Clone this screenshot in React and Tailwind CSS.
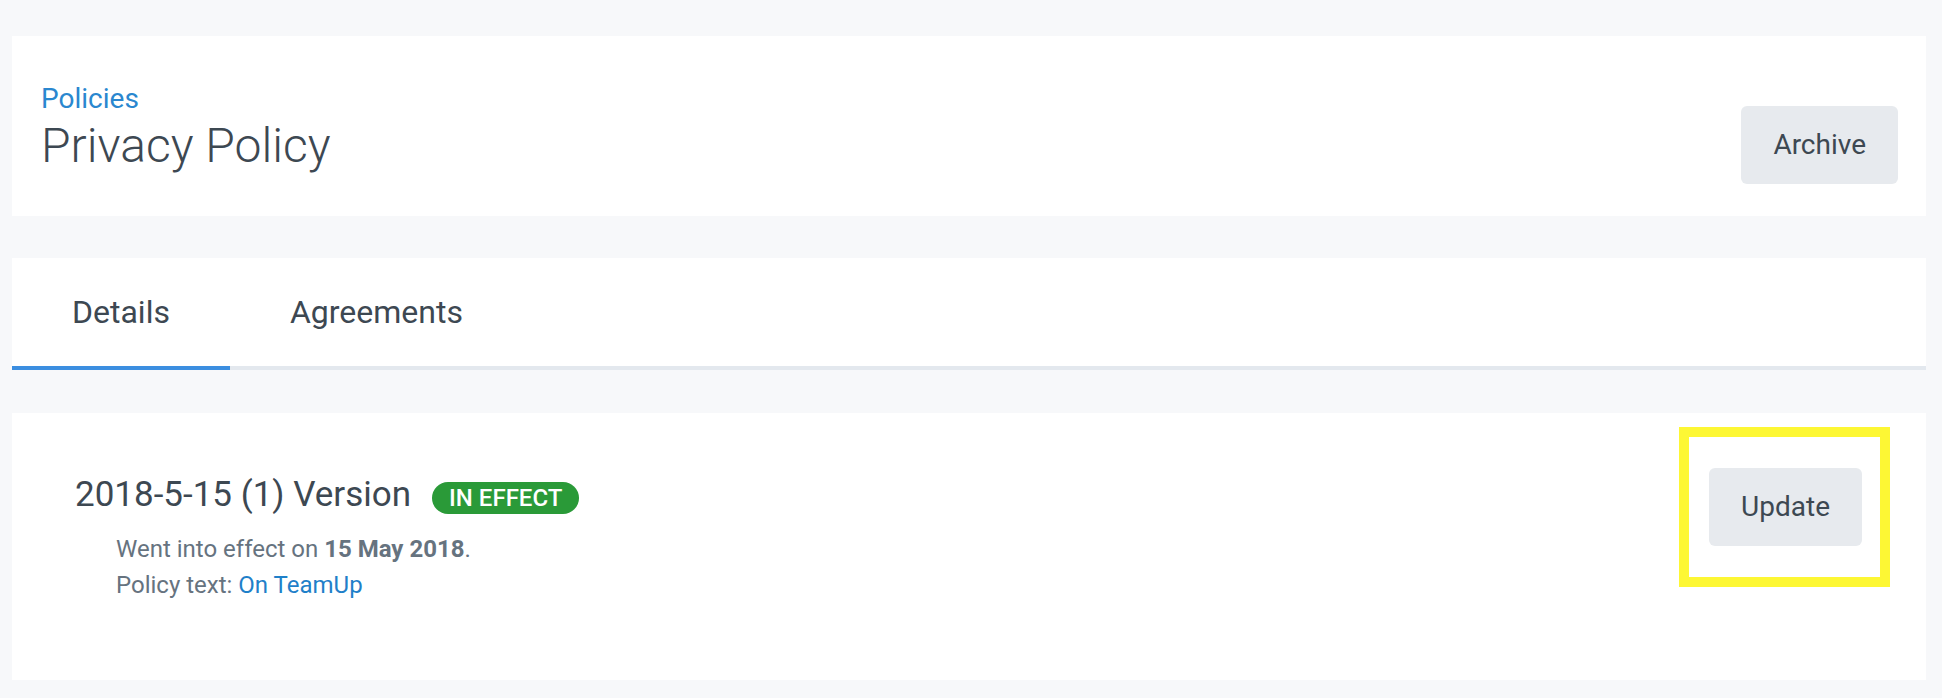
export default function App() {
  return (
    <div
      className="min-h-screen bg-[#f7f8fa] pt-[36px] pl-[12px] pr-[16px] pb-[16px] text-[#3d4852]"
      style={{ fontFamily: "Roboto, 'Noto Sans', sans-serif" }}
    >
      {/* header */}
      <div className="flex items-start justify-between bg-white pt-[46px] pb-[32px] pl-[29px] pr-[28px]">
        <div>
          <a href="#" className="block text-[28px] leading-[34px] text-[#2a87cf]">
            Policies
          </a>
          <h1 className="text-[48px] font-light leading-[60px]">Privacy Policy</h1>
        </div>
        <button className="mt-[24px] h-[78px] rounded-[6px] bg-[#e7eaee] px-[32px] text-[28px]">
          Archive
        </button>
      </div>

      {/* tabs */}
      <div className="mt-[42px] flex border-b-4 border-[#e3e8ee] bg-white">
        <div className="-mb-[4px] h-[112px] border-b-4 border-[#3b8ee0] px-[60px] text-[32px] leading-[108px]">
          Details
        </div>
        <div className="-mb-[4px] h-[112px] border-b-4 border-transparent px-[60px] text-[32px] leading-[108px]">
          Agreements
        </div>
      </div>

      {/* version */}
      <div className="mt-[43px] flex items-start justify-between bg-white pl-[63px] pr-[36px]">
        <div className="pt-[60px] pb-[77px]">
          <div className="flex items-baseline gap-[21px]">
            <h2 className="text-[35px] leading-[44px]">2018-5-15 (1) Version</h2>
            <span className="h-[32px] rounded-full bg-[#2a9a38] px-[17px] text-[24px] font-medium leading-[32px] text-white">
              IN EFFECT
            </span>
          </div>
          <div className="ml-[41px] mt-[14px] text-[24px] leading-[36px] text-[#66737f]">
            <p>
              Went into effect on <span className="font-bold">15 May 2018</span>.
            </p>
            <p>
              Policy text:{" "}
              <a href="#" className="text-[#1f80c9]">
                On TeamUp
              </a>
            </p>
          </div>
        </div>
        <div className="mt-[14px] border-[10px] border-[#fdf734] pl-[20px] pr-[18px] py-[31px]">
          <button className="h-[78px] rounded-[6px] bg-[#e7eaee] px-[32px] text-[28px]">
            Update
          </button>
        </div>
      </div>
    </div>
  );
}
